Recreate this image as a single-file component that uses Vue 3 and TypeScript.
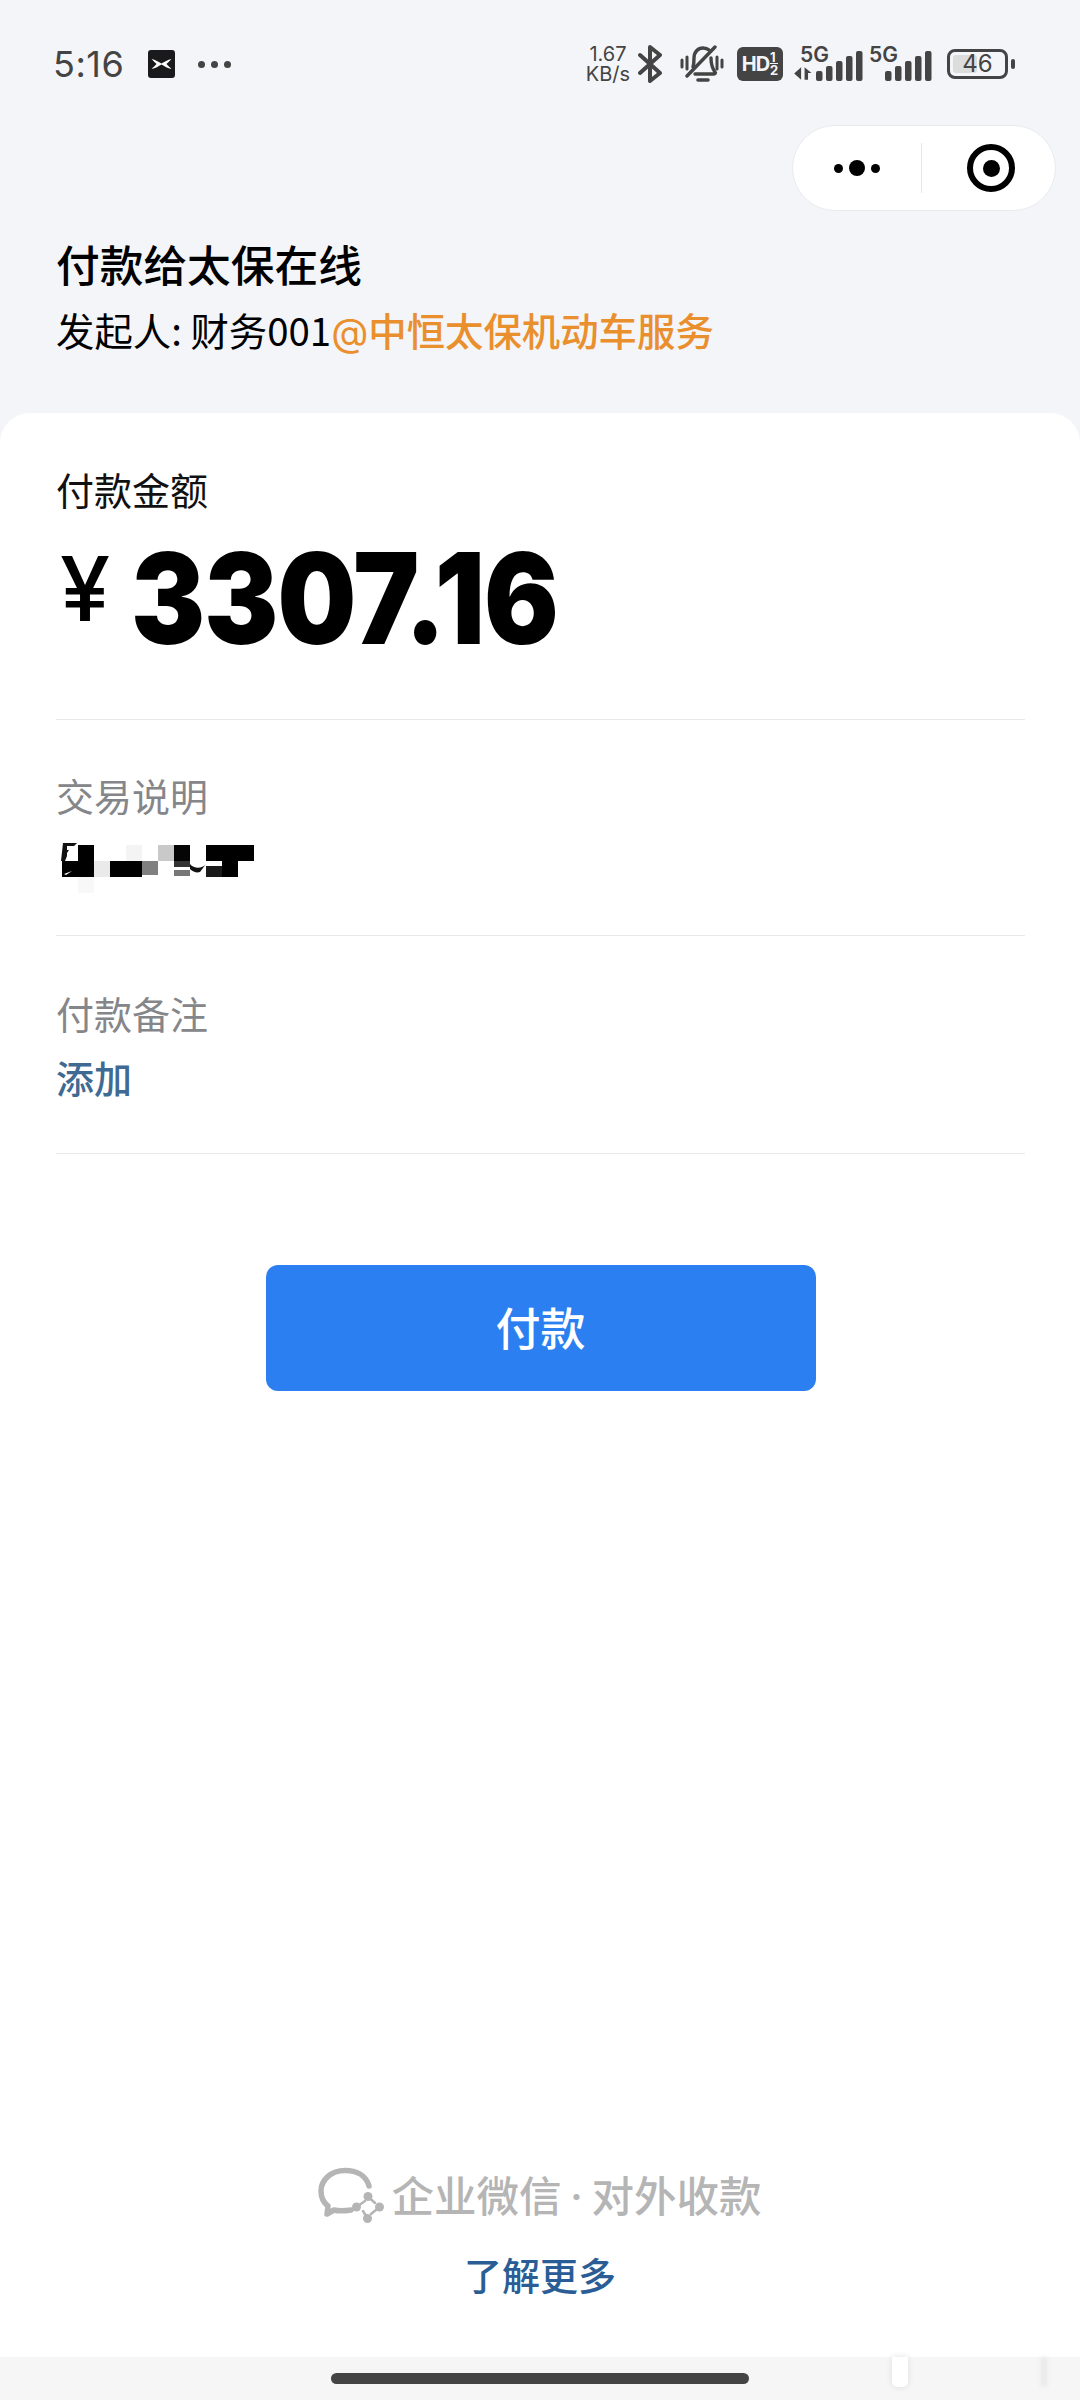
<script setup lang="ts">
const bars = [
  { x: 0, y: 20, h: 10 },
  { x: 10, y: 15, h: 15 },
  { x: 20, y: 10, h: 20 },
  { x: 30, y: 5, h: 25 },
  { x: 40, y: 0, h: 30 },
]
const mosaic = [
  { x: 20, y: 5, w: 16, h: 16, c: '#000' },
  { x: 68, y: 5, w: 16, h: 16, c: '#f4f4f4' },
  { x: 100, y: 5, w: 16, h: 16, c: '#c9c9c9' },
  { x: 116, y: 5, w: 16, h: 16, c: '#050505' },
  { x: 148, y: 5, w: 48, h: 16, c: '#000' },
  { x: 4, y: 21, w: 32, h: 16, c: '#000' },
  { x: 36, y: 21, w: 16, h: 16, c: '#eaeaea' },
  { x: 52, y: 21, w: 32, h: 16, c: '#000' },
  { x: 84, y: 21, w: 16, h: 14, c: '#808080' },
  { x: 116, y: 21, w: 16, h: 6, c: '#333' },
  { x: 116, y: 30, w: 16, h: 6, c: '#777' },
  { x: 148, y: 26, w: 16, h: 11, c: '#1a1a1a' },
  { x: 164, y: 21, w: 16, h: 16, c: '#000' },
  { x: 20, y: 37, w: 16, h: 16, c: '#f8f8f8' },
]
const drops = [
  { cx: 57, cy: 38.5, tx: 64, ty: 45 },
  { cx: 68.5, cy: 49, tx: 60, ty: 56 },
  { cx: 56.5, cy: 60.5, tx: 52, ty: 53 },
  { cx: 45.5, cy: 49, tx: 54, ty: 43 },
]
</script>

<template>
  <div class="page">
    <header class="top">
      <div class="status">
        <div class="status-left">
          <span class="time">5:16</span>
          <svg class="app-badge" width="27" height="28" viewBox="0 0 27 28">
            <rect width="27" height="28" rx="3" fill="#1a1a1c" />
            <path d="M3.5 9c4 .5 7 3 10 4.500C16.500 12 19.500 9.500 23.500 9c-2 2-4 4-5 5 1 1 3 3 5 5-4-.5-7-3-10-4.500C10.500 16 7.500 18.500 3.500 19c2-2 4-4 5-5-1-1-3-3-5-5z" fill="#fff" />
          </svg>
          <span class="more"><i></i><i></i><i></i></span>
        </div>
        <div class="status-right">
          <span class="speed">1.67<br />KB/s</span>
          <svg class="bt" width="24" height="38" viewBox="0 0 24 38" fill="none" stroke="#444" stroke-width="4" stroke-linejoin="round" stroke-linecap="round">
            <path d="M2 10l20 18-10 8V2l10 8L2 28" />
          </svg>
          <svg class="bell" width="44" height="38" viewBox="0 0 44 38" fill="none" stroke="#444" stroke-width="3.400" stroke-linecap="round" stroke-linejoin="round">
            <path d="M13 22c1-3 1-6 1-9 0-6 4-10 9-10 3 0 5 1 6 2" />
            <path d="M31 13c0 6 1 10 4 14 1 1 0 2-1 2H15" />
            <path d="M7 31L35 2" />
            <path d="M2 15v7M7 12v12M37 12v12M42 15v7" stroke-width="3" />
            <path d="M18 35h10" stroke-width="3.600" />
          </svg>
          <span class="hd">
            <b class="hd-main">HD</b>
            <span class="hd-frac"><b>1</b><b>2</b></span>
          </span>
          <span class="net">
            <span class="net-label">5G</span>
            <svg class="arrows" width="20" height="15" viewBox="0 0 17 13" fill="#444">
              <path d="M0 6.500L6 1v11zM9 1l6 5h-3v6H9z" />
            </svg>
            <svg class="signal" width="47" height="30" viewBox="0 0 47 30">
              <rect v-for="b in bars" :key="b.x" :x="b.x" :y="b.y" width="6.500" :height="b.h" rx="2" fill="#444" />
            </svg>
          </span>
          <span class="net second">
            <span class="net-label">5G</span>
            <svg class="signal" width="47" height="30" viewBox="0 0 47 30">
              <rect v-for="b in bars" :key="b.x" :x="b.x" :y="b.y" width="6.500" :height="b.h" rx="2" fill="#444" />
            </svg>
          </span>
          <span class="battery">
            <span class="battery-body">
              <span class="battery-fill"></span>
              <span class="battery-num">46</span>
            </span>
            <span class="battery-cap"></span>
          </span>
        </div>
      </div>

      <div class="capsule-row">
        <div class="capsule">
          <div class="capsule-side">
            <span class="dot small"></span>
            <span class="dot big"></span>
            <span class="dot small"></span>
          </div>
          <span class="capsule-sep"></span>
          <div class="capsule-side">
            <span class="target"><span></span></span>
          </div>
        </div>
      </div>

      <h1 class="title">付款给太保在线</h1>
      <p class="sender">发起人: 财务001<span class="org"><span class="at">@</span>中恒太保机动车服务</span></p>
    </header>

    <main class="card">
      <section class="block amount-block">
        <div class="label dark">付款金额</div>
        <div class="amount">
          <span class="currency">¥</span>
          <span class="value">3307.16</span>
        </div>
      </section>

      <section class="block info-block">
        <div class="label">交易说明</div>
        <svg class="mosaic" width="200" height="56" viewBox="0 0 200 56">
          <rect v-for="m in mosaic" :key="`${m.x}-${m.y}`" :x="m.x" :y="m.y" :width="m.w" :height="m.h" :fill="m.c" />
          <path d="M5 3h14l-3 3h-7v4h2l-2 3v3l-2 5H3z" fill="#111" />
          <path d="M6 34l8-3-6 4z" fill="#fff" />
          <path d="M132 24c4 5 12 5 16 0l-6 8c-3 1-7 0-10-3z" fill="#111" />
        </svg>
      </section>

      <section class="block note-block">
        <div class="label">付款备注</div>
        <div class="add">添加</div>
      </section>

      <div class="button-row">
        <button class="pay" type="button">付款</button>
      </div>

      <footer class="foot">
        <div class="brand">
          <svg class="logo" width="66" height="58" viewBox="7 8 66 58">
            <path d="M58 28C55 17 45 12.500 34 12.500 20 12.500 10 22 10 33c0 7 3 12 7 15l-1 8 7-4c4 1 11 1 17 0" fill="none" stroke="#b5b5b5" stroke-width="5.500" stroke-linejoin="round" stroke-linecap="round" />
            <g v-for="d in drops" :key="d.cx">
              <circle :cx="d.cx" :cy="d.cy" r="4.500" fill="#b5b5b5" />
              <line :x1="d.cx" :y1="d.cy" :x2="d.tx" :y2="d.ty" stroke="#b5b5b5" stroke-width="2.500" stroke-linecap="round" />
            </g>
          </svg>
          <span class="brand-text">企业微信<span class="mid">·</span>对外收款</span>
        </div>
        <div class="learn">了解更多</div>
      </footer>
      <div class="nav">
        <span class="home"></span>
        <span class="ghost ghost-a"></span>
        <span class="ghost ghost-b"></span>
      </div>
    </main>
  </div>
</template>

<style>
html, body { margin: 0; background: #f4f5f7; }
</style>

<style scoped>
* { box-sizing: border-box; }
.page {
  width: 1080px;
  height: 2400px;
  display: flex;
  flex-direction: column;
  background: #f4f5f8;
  font-family: "Noto Sans CJK SC", "Inter", sans-serif;
  color: #000;
  overflow: hidden;
}
.top { height: 413px; flex: none; }
.status {
  height: 64px;
  margin-top: 32px;
  padding: 0 65px 0 53px;
  display: flex;
  align-items: center;
  justify-content: space-between;
  color: #444;
  font-family: "Inter", sans-serif;
}
.status-left { display: flex; align-items: center; }
.time { font-size: 36px; line-height: 40px; width: 95px; letter-spacing: 0.5px; }
.more { display: flex; gap: 6px; margin-left: 23px; }
.more i { width: 7px; height: 7px; border-radius: 50%; background: #444; }
.status-right { display: flex; align-items: center; }
.speed { width: 60px; font-size: 20px; line-height: 20px; text-align: center; }
.bell { margin-left: 18px; }
.hd {
  margin-left: 13px;
  width: 46px;
  height: 34px;
  border-radius: 6px;
  background: #444;
  color: #f4f5f7;
  display: flex;
  align-items: center;
  justify-content: center;
  gap: 1px;
}
.hd-main { font-size: 20px; line-height: 1; letter-spacing: -1px; }
.hd-frac { display: flex; flex-direction: column; font-size: 13px; line-height: 13px; }
.hd-frac b:first-child { border-bottom: 1px solid #f4f5f7; line-height: 12px; }
.net { position: relative; width: 67px; height: 34px; margin-left: 13px; }
.net.second { width: 63px; margin-left: 6px; }
.net-label { position: absolute; left: 4px; top: 0; font-size: 21px; line-height: 16px; font-weight: 600; }
.net.second .net-label { left: 0; }
.arrows { position: absolute; left: -2px; bottom: 0; }
.signal { position: absolute; right: 0; bottom: 0; }
.battery { display: flex; align-items: center; margin-left: 15px; }
.battery-body {
  position: relative;
  width: 61px;
  height: 30px;
  border: 3px solid #444;
  border-radius: 8px;
  display: flex;
  align-items: center;
  justify-content: center;
}
.battery-fill { position: absolute; left: 3px; top: 3px; bottom: 3px; width: 24px; background: #dcdcdc; border-radius: 3px; }
.battery-num { position: relative; font-size: 24px; line-height: 1; }
.battery-cap { width: 4px; height: 10px; background: #444; border-radius: 2px; margin-left: 3px; }
.capsule-row { display: flex; justify-content: flex-end; padding: 29px 24px 0 0; }
.capsule {
  width: 264px;
  height: 86px;
  border: 1px solid #e9ebee;
  border-radius: 43px;
  background: #fff;
  display: flex;
  align-items: center;
}
.capsule-side { flex: 1; display: flex; align-items: center; justify-content: center; gap: 6px; }
.capsule-side:last-child { padding-left: 5px; }
.capsule-sep { width: 1px; height: 50px; background: #e6e6e6; }
.dot { background: #000; border-radius: 50%; }
.dot.small { width: 9px; height: 9px; }
.dot.big { width: 16px; height: 16px; }
.target {
  width: 48px;
  height: 48px;
  border: 6px solid #000;
  border-radius: 50%;
  display: flex;
  align-items: center;
  justify-content: center;
}
.target span { width: 17px; height: 17px; border-radius: 50%; background: #000; }
.title { margin: 27px 0 0 56px; font-size: 43.7px; line-height: 50px; font-weight: 500; }
.sender { margin: 16px 0 0 56px; font-size: 38.4px; line-height: 50px; font-weight: 400; }
.org { color: #ea8f2d; font-weight: 500; }
.at { font-family: "Inter", sans-serif; font-weight: 400; }
.card {
  flex: 1;
  background: #fff;
  border-radius: 30px 30px 0 0;
  display: flex;
  flex-direction: column;
  min-height: 0;
}
.block { margin: 0 55px 0 56px; border-bottom: 1px solid #e9e9e9; }
.amount-block { height: 307px; padding-top: 49px; }
.info-block { height: 216px; padding-top: 48px; }
.note-block { height: 218px; padding-top: 50px; }
.label { font-size: 38px; line-height: 54px; color: #85868a; }
.label.dark { color: #111; }
.amount { display: flex; align-items: flex-start; margin-top: 17px; }
.currency { font-family: "Inter", sans-serif; font-size: 90px; line-height: 112px; font-weight: 500; width: 75px; padding-left: 4px; }
.value {
  display: inline-block;
  font-family: "Inter", sans-serif;
  font-size: 126px;
  line-height: 130px;
  font-weight: 900;
  letter-spacing: -1px;
  transform: scaleX(0.88);
  transform-origin: left center;
}
.mosaic { display: block; margin: 18px 0 0 2px; }
.add { font-size: 38px; line-height: 54px; margin-top: 10px; color: #3f6a94; font-weight: 500; }
.button-row { display: flex; justify-content: center; padding: 111px 0 0 1px; }
.pay {
  width: 550px;
  height: 126px;
  border: none;
  border-radius: 12px;
  background: #2b7ff0;
  color: #fff;
  font-family: inherit;
  font-size: 45px;
  font-weight: 500;
  padding: 0 0 3px;
}
.foot { margin-top: auto; display: flex; flex-direction: column; align-items: center; }
.brand { display: flex; align-items: center; gap: 7px; height: 64px; }
.brand-text { font-size: 42.5px; line-height: 60px; color: #b5b5b5; font-weight: 500; }
.mid { display: inline-block; width: 30px; text-align: center; font-family: "Inter", sans-serif; }
.learn { font-size: 38px; line-height: 56px; color: #2a5d96; font-weight: 500; margin-top: 19px; }
.nav {
  position: relative;
  margin-top: 55px;
  height: 43px;
  background: #f6f6f6;
  display: flex;
  justify-content: center;
  padding-top: 16px;
}
.home { width: 418px; height: 11px; border-radius: 6px; background: #444; }
.ghost { position: absolute; top: 0; height: 30px; border-radius: 0 0 5px 5px; }
.ghost-a { left: 892px; width: 16px; background: #fff; box-shadow: 0 0 6px #dcdcdc; }
.ghost-b { left: 1041px; width: 6px; background: #e8e8e8; filter: blur(2px); }
</style>
